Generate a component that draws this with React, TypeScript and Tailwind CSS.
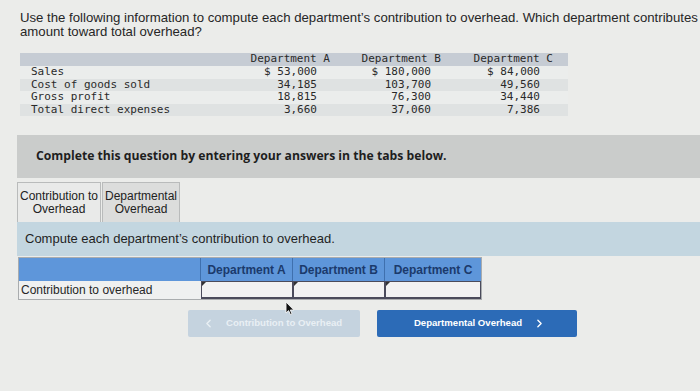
import { ChevronLeft, ChevronRight } from 'lucide-react';

const rows = [
  { label: 'Sales', a: '$ 53,000', b: '$ 180,000', c: '$ 84,000', shade: false },
  { label: 'Cost of goods sold', a: '34,185', b: '103,700', c: '49,560', shade: true },
  { label: 'Gross profit', a: '18,815', b: '76,300', c: '34,440', shade: false },
  { label: 'Total direct expenses', a: '3,660', b: '37,060', c: '7,386', shade: true },
];

function Cursor() {
  return (
    <svg className="absolute left-[285px] top-[301px]" width="10" height="15" viewBox="0 0 10 15">
      <path d="M1 1 L1 12 L3.6 9.6 L5.4 13.6 L7 12.9 L5.3 9 L8.8 9 Z" fill="#111" stroke="#f4f4f4" strokeWidth="0.9" />
    </svg>
  );
}

export default function App() {
  return (
    <div className="relative w-[700px] h-[391px] overflow-hidden bg-[#ebecea] font-['Liberation_Sans',Arial,sans-serif]">
      <div className="pt-[11px] pl-[20px] text-[13.2px] leading-[14px] text-[#262626] whitespace-nowrap">
        <p>Use the following information to compute each department’s contribution to overhead. Which department contributes</p>
        <p>amount toward total overhead?</p>
      </div>

      {/* given data */}
      <div className="ml-[20px] mt-[14px] w-[548px] font-['DejaVu_Sans_Mono',monospace] text-[11px] leading-[12.5px] text-[#2a2a2a]">
        <div className="flex h-[13px] bg-[#c6ccd4]">
          <div className="w-[230px]" />
          <div className="w-[80px] text-right">Department A</div>
          <div className="w-[111px] text-right">Department B</div>
          <div className="w-[112px] text-right">Department C</div>
        </div>
        {rows.map((r) => (
          <div key={r.label} className={`flex h-[12.5px] ${r.shade ? 'bg-[#dfe2e2]' : 'bg-[#ebedec]'}`}>
            <div className="w-[230px] pl-[11px]">{r.label}</div>
            <div className="w-[80px] text-right pr-[13px]">{r.a}</div>
            <div className="w-[111px] text-right pr-[10px]">{r.b}</div>
            <div className="w-[112px] text-right pr-[13px]">{r.c}</div>
          </div>
        ))}
      </div>

      <div className="ml-[17px] mt-[19px] h-[43px] bg-[#cacccb] flex items-center pl-[19px]">
        <span className="font-['Open_Sans',sans-serif] font-bold text-[12.2px] text-[#1e1e1e]">
          Complete this question by entering your answers in the tabs below.
        </span>
      </div>

      {/* tabs */}
      <div className="ml-[17px] mt-[4px] flex gap-[1px] text-[12px] leading-[13px] text-[#222]">
        <div className="w-[84px] h-[40px] bg-[#e9eae9] border border-b-0 border-[#b9bbbb] flex flex-col items-center justify-center whitespace-nowrap">
          <span>Contribution to</span>
          <span>Overhead</span>
        </div>
        <div className="w-[78px] h-[40px] bg-[#dcdddc] border border-b-0 border-[#b9bbbb] flex flex-col items-center justify-center whitespace-nowrap">
          <span>Departmental</span>
          <span>Overhead</span>
        </div>
      </div>

      <div className="ml-[17px] h-[34px] bg-[#c3d6e0] flex items-center pl-[8px] text-[13px] text-[#1f1f1f]">
        Compute each department’s contribution to overhead.
      </div>

      {/* answer grid */}
      <div className="ml-[18px] mt-[1px] w-[464px] border border-[#a9acae] text-[12px]">
        <div className="flex h-[23px] bg-[#5e96da] font-bold text-[#1b3a6c]">
          <div className="w-[182px] border-r border-[#3f70ae]" />
          <div className="w-[92px] border-r border-[#3f70ae] flex items-center justify-center">Department A</div>
          <div className="w-[92px] border-r border-[#3f70ae] flex items-center justify-center">Department B</div>
          <div className="flex-1 flex items-center justify-center">Department C</div>
        </div>
        <div className="flex h-[18px] bg-[#eff0f0]">
          <div className="w-[182px] pl-[2px] flex items-center text-[#262626]">Contribution to overhead</div>
          {[0, 1, 2].map((i) => (
            <div key={i} className={`relative ${i === 2 ? 'flex-1' : 'w-[92px]'} border border-b-2 border-[#4a4b5b] bg-[#f1f2f2]`}>
              <div className="absolute left-0 top-0 w-0 h-0 border-t-[4px] border-r-[4px] border-t-[#333] border-r-transparent" />
            </div>
          ))}
        </div>
      </div>

      {/* nav buttons */}
      <div className="flex mt-[10px] ml-[188px] gap-[17px] font-bold text-[9.6px]">
        <div className="w-[172px] h-[27px] rounded-[2px] bg-[#c5d3df] text-[#e9eff4] flex items-center pl-[14px] gap-[11px]">
          <ChevronLeft size={13} strokeWidth={2.5} />
          <span>Contribution to Overhead</span>
        </div>
        <div className="w-[200px] h-[27px] rounded-[2px] bg-[#2c6bb7] text-white flex items-center justify-center gap-[11px] pl-[6px]">
          <span>Departmental Overhead</span>
          <ChevronRight size={13} strokeWidth={2.5} />
        </div>
      </div>

      <Cursor />
    </div>
  );
}
